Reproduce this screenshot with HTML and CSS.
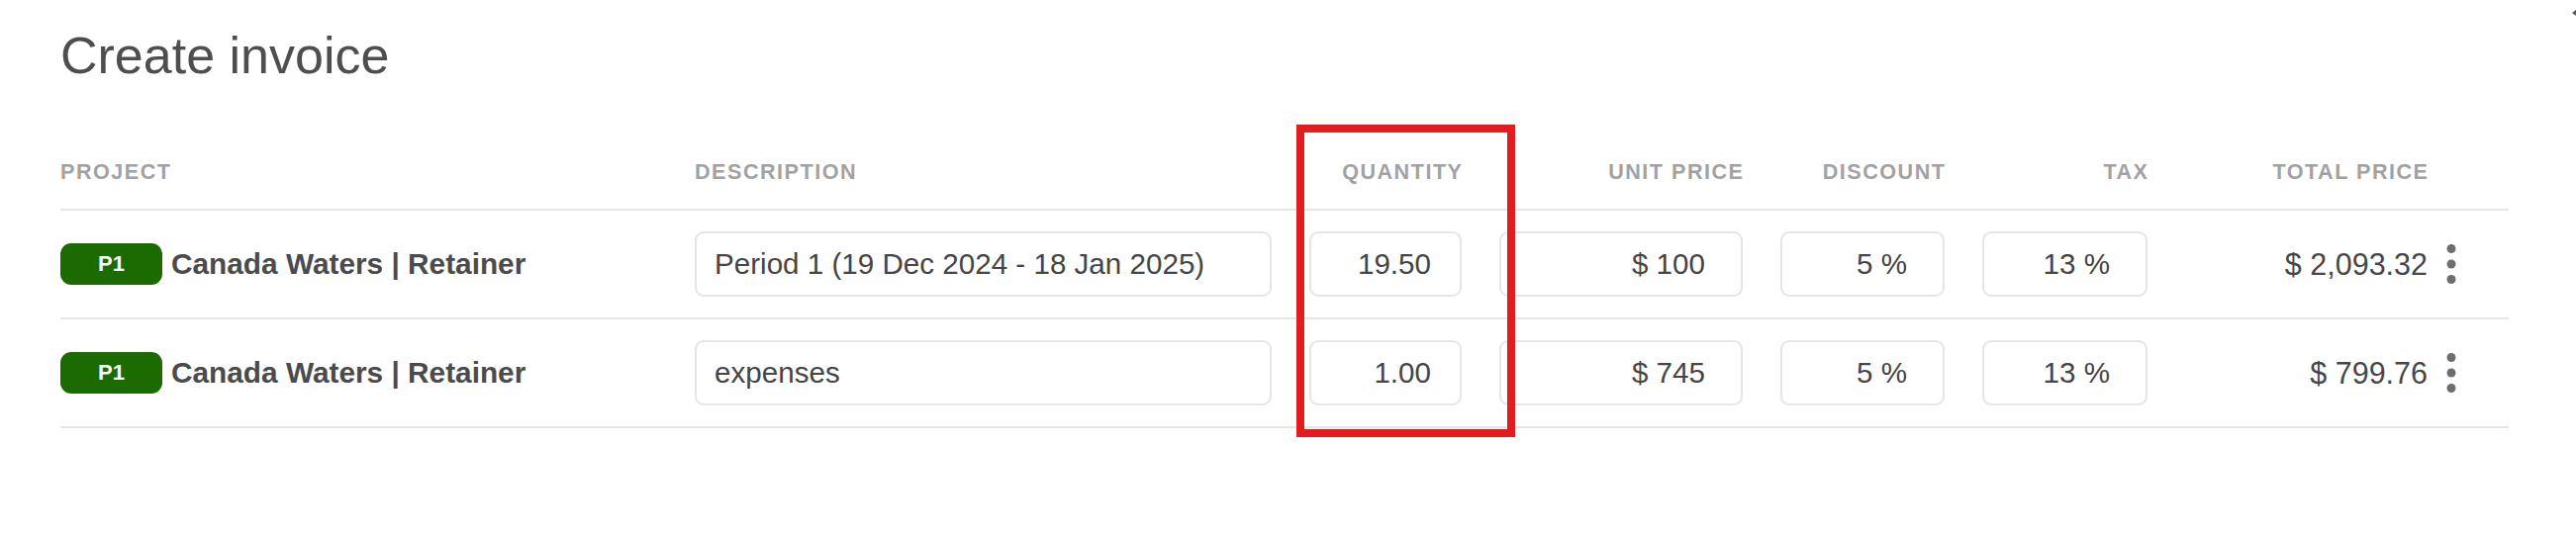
FILE: index.html
```html
<!DOCTYPE html>
<html lang="en">
<head>
<meta charset="utf-8">
<title>Create invoice</title>
<link rel="stylesheet" href="styles.css">
</head>
<body>
<div class="page">
  <h1 class="title">Create invoice</h1>
  <div class="table">
    <div class="row head">
      <div class="hcell">Project</div>
      <div class="hcell">Description</div>
      <div class="hcell num">Quantity</div>
      <div class="hcell num">Unit price</div>
      <div class="hcell num">Discount</div>
      <div class="hcell num">Tax</div>
      <div class="hcell num total-head">Total price</div>
    </div>
    <div class="row item">
      <div class="project"><span class="badge">P1</span><span class="pname">Canada Waters | Retainer</span></div>
      <input class="field" type="text" value="Period 1 (19 Dec 2024 - 18 Jan 2025)" readonly>
      <input class="field num qty" type="text" value="19.50" readonly>
      <input class="field num" type="text" value="$ 100" readonly>
      <input class="field num" type="text" value="5 %" readonly>
      <input class="field num" type="text" value="13 %" readonly>
      <div class="total"><span class="amount">$ 2,093.32</span><span class="kebab"><svg width="12" height="44" viewBox="0 0 12 44"><circle cx="6" cy="6.5" r="4.5"/><circle cx="6" cy="22" r="4.5"/><circle cx="6" cy="37.5" r="4.5"/></svg></span></div>
    </div>
    <div class="row item">
      <div class="project"><span class="badge">P1</span><span class="pname">Canada Waters | Retainer</span></div>
      <input class="field" type="text" value="expenses" readonly>
      <input class="field num qty" type="text" value="1.00" readonly>
      <input class="field num" type="text" value="$ 745" readonly>
      <input class="field num" type="text" value="5 %" readonly>
      <input class="field num" type="text" value="13 %" readonly>
      <div class="total"><span class="amount">$ 799.76</span><span class="kebab"><svg width="12" height="44" viewBox="0 0 12 44"><circle cx="6" cy="6.5" r="4.5"/><circle cx="6" cy="22" r="4.5"/><circle cx="6" cy="37.5" r="4.5"/></svg></span></div>
    </div>
  </div>
  <div class="highlight"></div>
  <div class="scroll-arrow"></div>
</div>
</body>
</html>
```
FILE: styles.css
```css
html, body {
  margin: 0;
  background: #ffffff;
}
body {
  font-family: "Liberation Sans", Arial, sans-serif;
}
.page {
  position: relative;
  box-sizing: border-box;
  width: 2603px;
  height: 540px;
  padding: 30px 0 0 61px;
  overflow: hidden;
}
.title {
  margin: 0;
  font-size: 52px;
  line-height: 52px;
  font-weight: 400;
  color: #4e4e4e;
}
.table {
  margin-top: 54px;
  width: 2474px;
}
.row {
  display: grid;
  grid-template-columns: 603px 583px 154px 246px 166px 167px 327px;
  column-gap: 38px;
  align-items: center;
  border-bottom: 2px solid #e6e6e6;
}
.head {
  height: 75px;
}
.hcell {
  font-size: 21.6px;
  line-height: 22px;
  font-weight: 700;
  letter-spacing: 1.5px;
  text-transform: uppercase;
  color: #a2a2a2;
  white-space: nowrap;
}
.hcell.num {
  text-align: right;
  margin-right: -1.5px;
}
.hcell.total-head {
  padding-right: 82px;
}
.item {
  height: 108px;
}
.project {
  display: flex;
  align-items: center;
  gap: 9px;
}
.badge {
  display: inline-flex;
  align-items: center;
  justify-content: center;
  width: 103px;
  height: 42px;
  border-radius: 11px;
  background: #1b6b00;
  color: #ffffff;
  font-size: 22px;
  font-weight: 700;
}
.pname {
  font-size: 29.8px;
  font-weight: 700;
  color: #4b4b4b;
  white-space: nowrap;
}
.field {
  display: block;
  width: 100%;
  height: 66px;
  box-sizing: border-box;
  margin: 0;
  padding: 0 36px 0 18px;
  border: 2px solid #e5e5e5;
  border-radius: 9px;
  background: #ffffff;
  font-family: "Liberation Sans", Arial, sans-serif;
  font-size: 29.6px;
  color: #454545;
  outline: none;
}
.field.num {
  text-align: right;
}
.field.qty {
  padding-right: 29px;
}
.total {
  display: flex;
  align-items: center;
  justify-content: flex-end;
  padding-right: 34px;
}
.amount {
  font-size: 30.5px;
  color: #474747;
  white-space: nowrap;
}
.kebab {
  display: flex;
  justify-content: center;
  align-items: center;
  width: 48px;
  height: 44px;
}
.kebab svg {
  fill: #6e6e6e;
}
.highlight {
  position: absolute;
  left: 1310px;
  top: 126px;
  width: 221px;
  height: 316px;
  box-sizing: border-box;
  border: 8px solid #e31c1f;
}
.scroll-arrow {
  position: absolute;
  right: 0;
  top: 10px;
  width: 0;
  height: 0;
  border-top: 3px solid transparent;
  border-bottom: 3px solid transparent;
  border-right: 4px solid #555555;
}
```
